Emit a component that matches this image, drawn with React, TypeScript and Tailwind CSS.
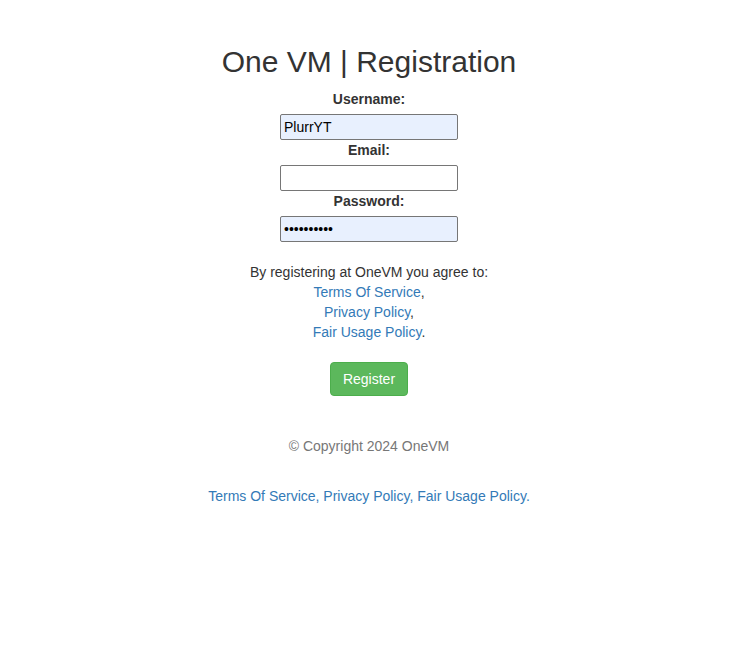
import React from "react";

export default function App() {
  const font = { fontFamily: '"Liberation Sans", Arial, sans-serif' };
  const inputCls =
    "block w-[178px] h-[26px] border border-[#767676] rounded-[2px] px-[3px] text-[14px] text-black outline-none";
  return (
    <div style={font} className="w-[738px] bg-white text-[#333] text-[14px] leading-[20px] min-h-[669px]">
      <div className="flex flex-col items-center text-center">
        <h1 className="mt-[42px] text-[30px] leading-[40px] font-normal text-[#333]">One VM | Registration</h1>
        <form className="mt-[7px] flex flex-col items-center">
          <label className="font-bold block mb-[5px]">Username:</label>
          <input className={inputCls + " bg-[#e8f0fe]"} defaultValue="PlurrYT" style={font} />
          <label className="font-bold block mb-[5px]">Email:</label>
          <input className={inputCls + " bg-white"} style={font} />
          <label className="font-bold block mb-[5px]">Password:</label>
          <input type="password" className={inputCls + " bg-[#e8f0fe]"} defaultValue="abcdefghij" style={font} />
          <div className="mt-[20px]">
            <p>By registering at OneVM you agree to:</p>
            <p>
              <a className="text-[#337ab7]">Terms Of Service</a>,
            </p>
            <p>
              <a className="text-[#337ab7]">Privacy Policy</a>,
            </p>
            <p>
              <a className="text-[#337ab7]">Fair Usage Policy</a>.
            </p>
          </div>
          <button
            type="button"
            className="mt-[20px] bg-[#5cb85c] border border-[#4cae4c] rounded-[4px] text-white px-[12px] py-[6px] text-[14px] leading-[20px]"
            style={font}
          >
            Register
          </button>
        </form>
        <p className="mt-[40px] text-[#777]">© Copyright 2024 OneVM</p>
        <p className="mt-[30px] text-[#337ab7]">Terms Of Service, Privacy Policy, Fair Usage Policy.</p>
      </div>
    </div>
  );
}
